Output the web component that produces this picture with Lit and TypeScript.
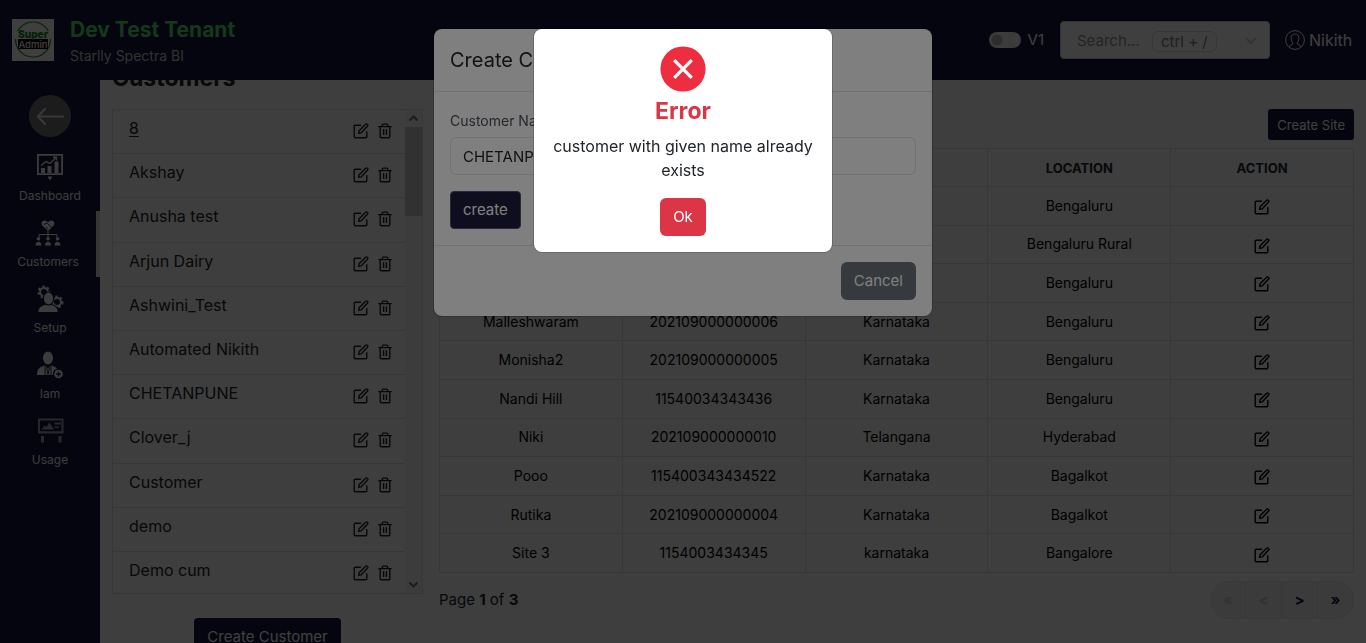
import { LitElement, html, css, svg, nothing } from "lit";
import { customElement, property } from "lit/decorators.js";

const customers = [
  "8", "Akshay", "Anusha test", "Arjun Dairy", "Ashwini_Test", "Automated Nikith",
  "CHETANPUNE", "Clover_j", "Customer", "demo", "Demo cum",
];

const sites: string[][] = [
  ["", "", "", "Bengaluru"],
  ["", "", "", "Bengaluru Rural"],
  ["", "", "", "Bengaluru"],
  ["Malleshwaram", "202109000000006", "Karnataka", "Bengaluru"],
  ["Monisha2", "202109000000005", "Karnataka", "Bengaluru"],
  ["Nandi Hill", "11540034343436", "Karnataka", "Bengaluru"],
  ["Niki", "202109000000010", "Telangana", "Hyderabad"],
  ["Pooo", "115400343434522", "Karnataka", "Bagalkot"],
  ["Rutika", "202109000000004", "Karnataka", "Bagalkot"],
  ["Site 3", "1154003434345", "karnataka", "Bangalore"],
];

const editIcon = html`<svg width="16" height="16" viewBox="0 0 16 16" fill="none" stroke="currentColor" stroke-width="1.4" stroke-linejoin="round" stroke-linecap="round">
  <path d="M7.500 2.200H2.200a1 1 0 0 0-1 1v10.600a1 1 0 0 0 1 1h10.600a1 1 0 0 0 1-1V8.600"/>
  <path d="M5.600 10.400l.5-2.600 6.600-6.600a1.100 1.100 0 0 1 1.600 0l.3.3a1.100 1.100 0 0 1 0 1.600L8.100 9.900z"/>
</svg>`;

const trashIcon = html`<svg width="14" height="16" viewBox="0 0 14 16" fill="none" stroke="currentColor" stroke-width="1.4" stroke-linejoin="round" stroke-linecap="round">
  <path d="M.8 3.600h12.400M4.300 3.400V1.900a.8.8 0 0 1 .8-.8h3.800a.8.8 0 0 1 .8.8v1.500M2.200 3.800v10a1 1 0 0 0 1 1h7.600a1 1 0 0 0 1-1v-10M5.600 6.800v4.600M8.400 6.800v4.600"/>
</svg>`;

const gear = (cx: number, cy: number, r: number) => svg`
  <circle cx=${cx} cy=${cy} r=${r} fill="none" stroke="currentColor" stroke-width="2"/>
  <circle cx=${cx} cy=${cy} r=${r + 1.6} fill="none" stroke="currentColor" stroke-width="2" stroke-dasharray="2.4 2.4"/>`;

const navIcons: Record<string, unknown> = {
  Dashboard: html`<svg width="28" height="28" viewBox="0 0 28 28" fill="currentColor">
    <path fill-rule="evenodd" d="M1 1h26v21H1zM2.800 2.800v17.400h22.400V2.800z"/>
    <path d="M5 15h4v5H5zM11.500 13h4v7h-4zM18.500 8.500h4V20h-4zM11.500 23.500h5L14 27.500z"/>
    <path d="M5 12.500l5-4 4 2 6-6M17 4.300h3.500v3.300" fill="none" stroke="currentColor" stroke-width="1.400"/></svg>`,
  Customers: html`<svg width="28" height="28" viewBox="0 0 28 28" fill="currentColor">
    <path d="M14 12L8.600 6.800C6.500 4.500 8 1.500 10.600 1.500c1.500 0 2.600.8 3.400 2 .8-1.200 1.900-2 3.400-2 2.600 0 4.100 3 2 5.300z"/>
    <path d="M10 5.500l3-1.500 5 5M12 8l2 2" fill="none" stroke="#14143c" stroke-width=".8"/>
    <path d="M14 12v6M5 18v-2.500h18V18" fill="none" stroke="currentColor" stroke-width="1"/>
    <circle cx="4.500" cy="19.800" r="1.800"/><circle cx="14" cy="19.800" r="1.800"/><circle cx="23.500" cy="19.800" r="1.800"/>
    <path d="M1.500 26.500c0-5 6-5 6 0zM11 26.500c0-5 6-5 6 0zM20.500 26.500c0-5 6-5 6 0z"/></svg>`,
  Setup: html`<svg width="28" height="28" viewBox="0 0 28 28" fill="currentColor">
    ${gear(8, 7, 4)}${gear(21, 17, 4)}
    <path d="M1.500 27.500c0-5.500 4-8 10.500-8.500 6.500.5 10.500 3 10.500 8.500z" stroke="#14143c" stroke-width="1.200"/>
    <ellipse cx="12.500" cy="13.500" rx="5.200" ry="6.500" stroke="#14143c" stroke-width="1.200"/></svg>`,
  Iam: html`<svg width="28" height="28" viewBox="0 0 28 28" fill="currentColor">
    <ellipse cx="12" cy="7" rx="5" ry="6.500"/>
    <path d="M1 24c0-6 2.500-8 8-9.500l3 3 3-3c5.500 1.500 8 3.500 8 9.500z"/>
    <path d="M10.500 16.500l1.500 7 1.500-7M9 15v9M15 15v9" fill="none" stroke="#14143c" stroke-width=".9"/>
    <circle cx="22.500" cy="23" r="5" stroke="#14143c" stroke-width="1.300"/>
    <path d="M22.500 20.500v5M20 23h5" stroke="#14143c" stroke-width="1.400"/></svg>`,
  Usage: html`<svg width="28" height="28" viewBox="0 0 28 28" fill="currentColor" opacity=".65">
    <path fill-rule="evenodd" d="M2 1.500h25.500v15H2zM4 3.500v10.800h21.500V3.500z"/>
    <path d="M5.500 12.500l3-4 2 1.500 3-4.500 4.500 7zM18.500 5.500H25v2h-6.500zM18.500 9.500h4.500v1.600h-4.500zM5 19h3v6.500H5zM22.500 19h3v6.500h-3z"/></svg>`,
};

@customElement("app-header")
class AppHeader extends LitElement {
  static styles = css`
    :host { display: block; background: #14143c; color: #fff; }
    .bar { display: flex; align-items: center; height: 80px; padding: 0 12px; box-sizing: border-box; }
    .logo { display: block; width: 42px; height: 42px; }
    .brand { margin-left: 16px; padding-top: 4px; flex: 1; }
    .tenant { margin: 0; font-size: 21px; line-height: 28px; font-weight: 700; color: #4fe36a; }
    .product { margin: 0; font-size: 14px; line-height: 24px; color: #c9c9c9; }
    .switch { display: flex; align-items: center; gap: 7px; font-size: 15px; }
    .switch input {
      appearance: none; width: 32px; height: 16px; margin: 0; border-radius: 8px;
      background: radial-gradient(circle at 8px 8px, #b5b5b5 5px, transparent 6px) #f0f0f0;
    }
    .search {
      display: flex; align-items: center; width: 210px; height: 38px; box-sizing: border-box; margin: 0 15px 0 16px;
      padding: 2px 11px 0 16px; border: 1px solid #ccc; border-radius: 4px; background: #fff; color: #808080; font-size: 15px;
    }
    .search input { width: 75px; padding: 0; border: 0; outline: 0; background: none; font: inherit; color: inherit; }
    .search input::placeholder { color: #909090; }
    kbd { font: inherit; line-height: 19px; padding: 0 8px; border: 1px solid #dcdcdc; border-radius: 6px; white-space: nowrap; margin-right: auto; }
    .user { display: flex; align-items: center; gap: 4px; min-width: 69px; color: inherit; text-decoration: none; }
  `;
  render() {
    return html`<header class="bar">
      <svg class="logo" viewBox="0 0 42 42" role="img" aria-label="Super Admin">
        <rect width="42" height="42" fill="#fff"/>
        <circle cx="21" cy="20.500" r="17.500" fill="none" stroke="#158a22" stroke-width="1.200"/>
        <rect x="3" y="12" width="36" height="8" fill="#fff"/>
        <rect x="6" y="20" width="30" height="10" fill="#000"/>
        <text x="21" y="19" text-anchor="middle" font-size="10" font-weight="900" fill="#158a22">Super</text>
        <text x="21" y="28.500" text-anchor="middle" font-size="9.500" font-weight="500" fill="#fff">Admin</text>
      </svg>
      <div class="brand"><h1 class="tenant">Dev Test Tenant</h1><p class="product">Starlly Spectra BI</p></div>
      <label class="switch"><input type="checkbox" role="switch">V1</label>
      <label class="search"><input type="text" placeholder="Search..." aria-label="Search"><kbd>ctrl + /</kbd>
        <svg width="14" height="10" viewBox="0 0 14 10" fill="none" stroke="#ccc" stroke-width="2"><path d="M2 2l5 5 5-5"/></svg></label>
      <a class="user" href="#">
        <svg width="20" height="20" viewBox="0 0 20 20" fill="none" stroke="currentColor" stroke-width="1"><circle cx="10" cy="10" r="9.400"/><path d="M4 17c0-2 4-2 4-4-3-4-2.500-9 2-9s5 5 2 9c0 2 4 2 4 4"/></svg>Nikith</a>
    </header>`;
  }
}

@customElement("app-sidebar")
class AppSidebar extends LitElement {
  @property() active = "Customers";
  static styles = css`
    :host { display: block; background: #14143c; color: #fff; }
    .back { display: grid; place-items: center; width: 42px; height: 42px; margin: 15px auto 8px; padding: 0; border: 0; border-radius: 50%; background: #727272; color: #e0e0e0; }
    nav { display: flex; flex-direction: column; }
    a { display: flex; flex-direction: column; align-items: center; gap: 7px; height: 66px; box-sizing: border-box; padding-top: 8px; color: #f0f0f0; font-size: 12px; line-height: 15px; text-decoration: none; }
    a.active { border-right: 4px solid #d8d8d8; }
    svg { display: block; }
  `;
  render() {
    return html`<button class="back" aria-label="Back"><svg width="28" height="18" viewBox="0 0 28 18" fill="none" stroke="currentColor" stroke-width="2.200" stroke-linecap="round" stroke-linejoin="round"><path d="M27 9.500H2M9 2L2 9.500 9 17"/></svg></button>
      <nav>${Object.keys(navIcons).map((name) => html`<a href="#" class=${name === this.active ? "active" : nothing}>${navIcons[name]}<span>${name}</span></a>`)}</nav>`;
  }
}

@customElement("customer-list")
class CustomerList extends LitElement {
  static styles = css`
    :host { display: flex; flex-direction: column; }
    h2 { margin: 0 0 16px; font-size: 23px; line-height: 29px; font-weight: 700; }
    .frame { display: flex; height: 485px; box-sizing: border-box; border: 1px solid #dedede; overflow: hidden; }
    ul { flex: 1; display: flex; flex-direction: column; margin: 0 0 -3px; padding: 0; list-style: none; }
    li { flex: 1; display: flex; align-items: flex-start; justify-content: space-between; padding: 0 13px 0 16px; border-bottom: 1px solid #dedede; }
    li a { color: inherit; text-decoration: none; line-height: 24px; margin-top: 6px; }
    li:first-child a { text-decoration: underline; text-underline-offset: 2px; }
    .actions { display: flex; gap: 9px; margin-top: 13px; }
    .icon { display: flex; padding: 0; border: 0; background: none; color: #222; }
    .scroll { display: flex; flex-direction: column; align-items: center; width: 17px; background: #f1f1f1; color: #707070; }
    .scroll svg { margin: 4px 0; }
    .thumb { width: 17px; height: 89px; margin-bottom: auto; background: #c6c6c6; }
    .add { align-self: center; margin-top: 24px; height: 38px; padding: 0 13px; border: 0; border-radius: 4px; background: #14143c; color: #fff; font: inherit; font-size: 15px; }
  `;
  render() {
    return html`<h2>Customers</h2>
      <div class="frame"><ul>${customers.map((name) => html`<li><a href="#">${name}</a>
        <span class="actions"><button class="icon" aria-label="Edit ${name}">${editIcon}</button><button class="icon" aria-label="Delete ${name}">${trashIcon}</button></span></li>`)}</ul>
        <div class="scroll" aria-hidden="true">
          <svg width="11" height="9" viewBox="0 0 11 9" fill="none" stroke="currentColor" stroke-width="2"><path d="M1.500 6.500l4-4 4 4"/></svg>
          <div class="thumb"></div>
          <svg width="11" height="9" viewBox="0 0 11 9" fill="none" stroke="currentColor" stroke-width="2"><path d="M1.500 2.500l4 4 4-4"/></svg>
        </div></div>
      <button class="add">Create Customer</button>`;
  }
}

@customElement("site-table")
class SiteTable extends LitElement {
  static styles = css`
    :host { display: flex; flex-direction: column; }
    .create { align-self: flex-end; height: 31px; padding: 0 9px; border: 0; border-radius: 3px; background: #14143c; color: #fff; font: inherit; font-size: 13px; }
    table { width: 100%; height: 425px; margin-top: 8px; table-layout: fixed; border-collapse: collapse; font-size: 14px; line-height: 20px; text-align: center; color: #000; }
    th, td { height: 38px; padding: 0; border: 1px solid #dedede; box-sizing: border-box; }
    th { font-size: 13px; font-weight: 700; color: #212529; }
    .icon { display: block; margin: 3px auto 0; padding: 0; border: 0; background: none; color: #000; height: 16px; }
    .icon svg { display: block; }
    .foot { display: flex; justify-content: space-between; align-items: center; margin-top: 8px; font-size: 15px; }
    .pager { display: flex; border: 1px solid #e6e6e6; border-radius: 19px; background: #ededed; overflow: hidden; }
    .pager button { width: 36px; height: 36px; padding: 0; border: 0; border-left: 1px solid #e0e0e0; background: none; font: inherit; font-weight: 700; color: #14143c; }
    .pager button:first-child { border-left: 0; width: 34px; }
    .pager button:disabled { color: #c8c8c8; }
  `;
  render() {
    return html`<button class="create">Create Site</button>
      <table><thead><tr>${["", "", "", "LOCATION", "ACTION"].map((t) => html`<th scope="col">${t}</th>`)}</tr></thead>
      <tbody>${sites.map((row) => html`<tr>${row.map((c) => html`<td>${c}</td>`)}<td><button class="icon" aria-label="Edit site">${editIcon}</button></td></tr>`)}</tbody></table>
      <div class="foot"><span>Page <b>1</b> of <b>3</b></span>
        <div class="pager"><button disabled>«</button><button disabled>&lt;</button><button>&gt;</button><button>»</button></div></div>`;
  }
}

@customElement("app-root")
class AppRoot extends LitElement {
  static styles = css`
    :host { display: flex; flex-direction: column; height: 100vh; overflow: hidden; font: 16px/24px Inter, sans-serif; color: #212529; }
    .body { flex: 1; display: flex; min-height: 0; }
    app-sidebar { flex: 0 0 100px; }
    main { flex: 1; min-width: 0; display: flex; align-items: flex-start; gap: 16px; padding: 0 12px; background: #f8f8f8; overflow: hidden; }
    customer-list { flex: 0 0 311px; margin-top: -16px; }
    site-table { flex: 1; margin-top: 29px; }
    .backdrop { position: fixed; inset: 0; display: flex; justify-content: center; align-items: flex-start; padding-top: 29px; background: rgba(0, 0, 0, 0.5); }
    .dialog { width: 498px; border-radius: 8px; background: #fff; box-shadow: 0 0 0 1px rgba(0, 0, 0, 0.175); }
    .head { padding: 16px; border-bottom: 1px solid #dee2e6; }
    .head h2 { margin: 0; font-size: 20px; line-height: 30px; font-weight: 400; }
    .form { display: flex; flex-direction: column; align-items: flex-start; padding: 17px 16px 16px; }
    .form label { margin-bottom: 4px; font-size: 14px; color: #495057; }
    .form input { width: 100%; height: 38px; box-sizing: border-box; margin-bottom: 16px; padding: 0 12px; border: 1px solid #dee2e6; border-radius: 6px; background: #fff; font: inherit; font-size: 15px; color: #212529; }
    .actions { display: flex; justify-content: flex-end; padding: 16px; border-top: 1px solid #dee2e6; }
    .btn { height: 38px; padding: 0 13px; border: 0; border-radius: 6px; background: #6c757d; color: #fff; font: inherit; font-size: 15px; }
    .primary { padding: 0 12px; border: 1px solid #55557a; border-radius: 4px; background: #1c1c3c; }
    .danger { background: #dc3545; }
    .alert { display: flex; flex-direction: column; align-items: center; width: 298px; box-sizing: border-box; padding: 16px; text-align: center; }
    .alert h3 { margin: 4px 0 8px; font-size: 23px; line-height: 29px; font-weight: 700; color: #dc3545; }
    .alert p { margin: 0 0 16px; }
  `;
  render() {
    return html`<app-header></app-header>
      <div class="body"><app-sidebar></app-sidebar>
        <main><customer-list></customer-list><site-table></site-table></main></div>
      <div class="backdrop"><div class="dialog" role="dialog" aria-label="Create Customer">
        <div class="head"><h2>Create Customer</h2></div>
        <div class="form"><label for="name">Customer Name</label><input id="name" type="text" .value=${"CHETANPUNE"}>
          <button class="btn primary">create</button></div>
        <div class="actions"><button class="btn">Cancel</button></div>
      </div></div>
      <div class="backdrop"><div class="dialog alert" role="alertdialog" aria-label="Error">
        <svg width="48" height="48" viewBox="0 0 48 48"><circle cx="24" cy="24" r="22.600" fill="#ee2d41"/><path d="M15.200 15.200l17.600 17.600M32.800 15.200L15.200 32.800" stroke="#fff" stroke-width="3.200"/></svg>
        <h3>Error</h3><p>customer with given name already exists</p>
        <button class="btn danger">Ok</button>
      </div></div>`;
  }
}
